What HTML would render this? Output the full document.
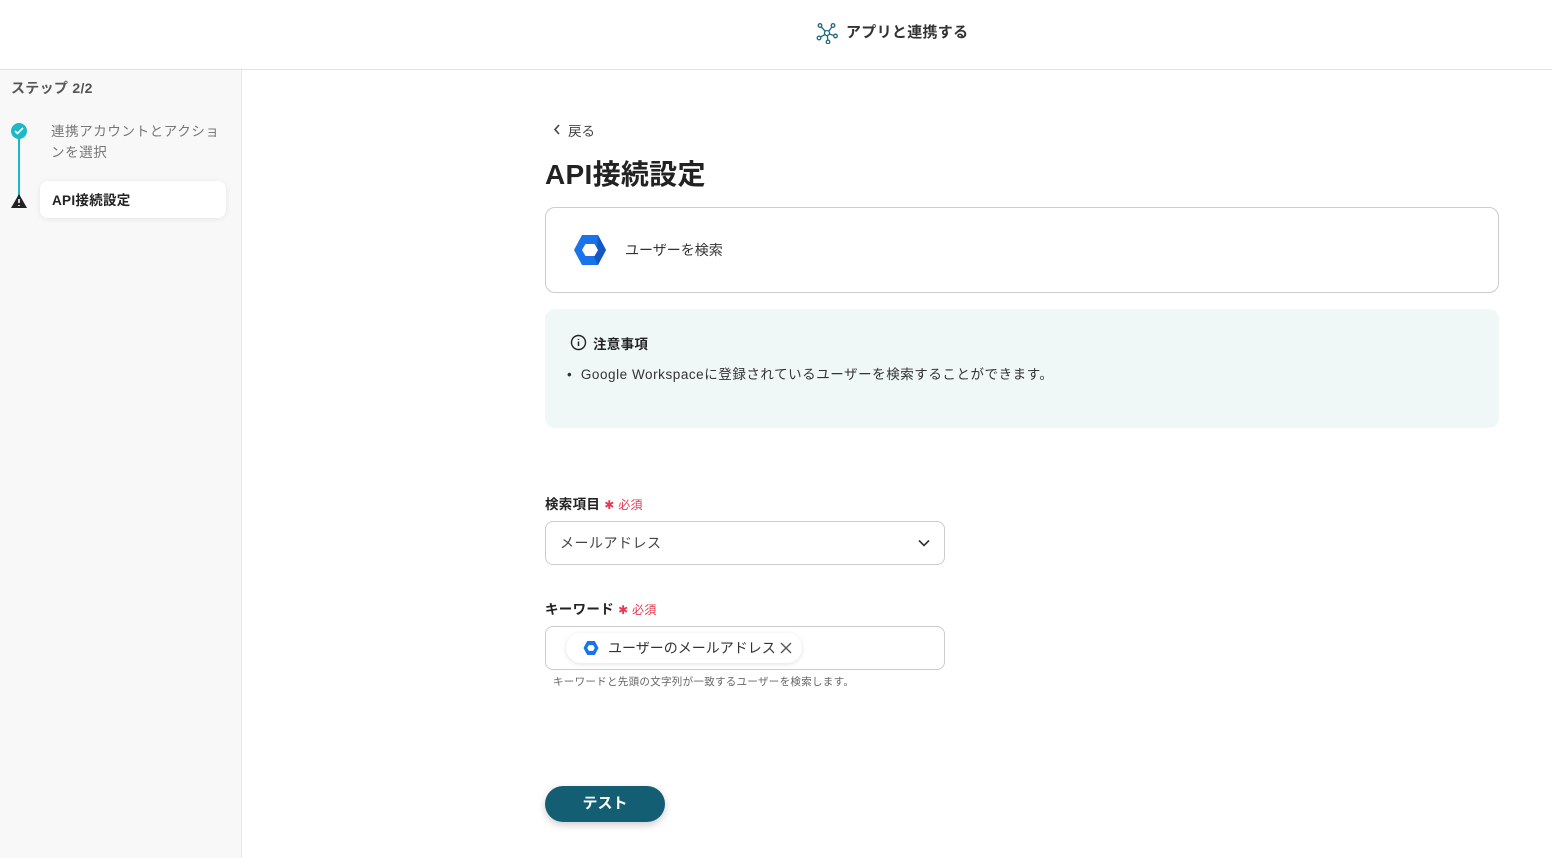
<!DOCTYPE html>
<html><head><meta charset="utf-8"><style>
*{box-sizing:border-box;margin:0;padding:0}
body{width:1552px;height:858px;overflow:hidden;background:#fff;font-family:"Liberation Sans","Noto Sans CJK JP",sans-serif;color:#222;position:relative}
.top{position:absolute;left:0;top:0;width:1552px;height:70px;border-bottom:1px solid #e3e3e3;background:#fff}
.side{position:absolute;left:0;top:70px;width:242px;height:788px;background:#f8f8f8;border-right:1px solid #e6e6e6}
.abs{position:absolute}
</style></head><body>
<div class="top">
 <svg class="abs" style="left:816px;top:22px" width="22" height="22" viewBox="0 0 22 22" fill="none" stroke="#1f6b80" stroke-width="1.3"><circle cx="11" cy="11" r="2.5"/><circle cx="4" cy="3.5" r="1.8"/><circle cx="17" cy="3.5" r="1.8"/><circle cx="3" cy="16" r="1.8"/><circle cx="12" cy="20" r="1.8"/><circle cx="19.5" cy="14" r="1.8"/><path d="M9 9L5.3 5M13 9l2.8-4M9 12.5L4.5 15M11.3 13.5l.5 4.8M13.3 12l4.5 1.5"/></svg>
 <div class="abs" style="left:846px;top:21px;font-size:15px;font-weight:bold;color:#333;letter-spacing:0.3px">アプリと連携する</div>
</div>
<div class="side">
 <div class="abs" style="left:11px;top:8px;font-size:14px;font-weight:bold;color:#555;letter-spacing:0.3px">ステップ 2/2</div>
 <div class="abs" style="left:18px;top:62px;width:2px;height:70px;background:#1cb9c8"></div>
 <div class="abs" style="left:11px;top:53px;width:16px;height:16px;border-radius:50%;background:#1cb9c8"></div>
 <svg class="abs" style="left:14px;top:57px" width="10" height="8"><path d="M1 4l2.5 2.5L9 1" stroke="#fff" stroke-width="1.6" fill="none"/></svg>
 <svg class="abs" style="left:10px;top:123px" width="18" height="16"><path d="M9 1L17 15H1z" fill="#222"/><path d="M9 6v4M9 12v1" stroke="#fff" stroke-width="1.6"/></svg>
 <div class="abs" style="left:51px;top:51px;font-size:13.5px;line-height:21px;color:#777;width:170px;letter-spacing:0.6px">連携アカウントとアクショ<br>ンを選択</div>
 <div class="abs" style="left:40px;top:111px;width:186px;height:37px;background:#fff;border-radius:8px;box-shadow:0 1px 6px rgba(0,0,0,.08);font-size:13.5px;font-weight:bold;padding:8px 12px;letter-spacing:0.3px">API接続設定</div>
</div>
<svg class="abs" style="left:553px;top:124px" width="8" height="11"><path d="M6 1L2 5.5 6 10" stroke="#444" stroke-width="1.6" fill="none"/></svg>
<div class="abs" style="left:568px;top:120px;font-size:13.5px;color:#444">戻る</div>
<div class="abs" style="left:545px;top:153px;font-size:28px;font-weight:bold;color:#222;letter-spacing:0.3px">API接続設定</div>
<div class="abs" style="left:545px;top:207px;width:954px;height:86px;border:1px solid #ccc;border-radius:10px"></div>
<svg class="abs" style="left:573px;top:234px" width="34" height="32" viewBox="0 0 34 32"><path d="M9 1h16l8 15-8 15H9L1 16z" fill="#1a73e8"/><path d="M25 1l8 15-8 15-4-8 3-7z" fill="#1557c4"/><path d="M12.5 10h9l3.5 6-3.5 6h-9L9 16z" fill="#fff"/></svg>
<div class="abs" style="left:625px;top:240px;font-size:14px;color:#333">ユーザーを検索</div>
<div class="abs" style="left:545px;top:309px;width:954px;height:119px;background:#f0f8f7;border-radius:10px"></div>
<svg class="abs" style="left:570px;top:334px" width="17" height="17"><circle cx="8.5" cy="8.5" r="7" stroke="#222" stroke-width="1.4" fill="none"/><path d="M8.5 7.5v4.5M8.5 5v1" stroke="#222" stroke-width="1.5"/></svg>
<div class="abs" style="left:593px;top:333px;font-size:13.5px;font-weight:bold;letter-spacing:0.3px">注意事項</div>
<div class="abs" style="left:567px;top:363px;font-size:13.5px;color:#333;letter-spacing:0.55px">•&nbsp; Google Workspaceに登録されているユーザーを検索することができます。</div>
<div class="abs" style="left:545px;top:493px;font-size:13.5px;font-weight:bold;letter-spacing:0.3px">検索項目 <span style="color:#e8364f;font-size:12px;font-weight:normal">✱ 必須</span></div>
<div class="abs" style="left:545px;top:521px;width:400px;height:44px;border:1px solid #ccc;border-radius:8px;padding:11px 14px;font-size:14px;color:#444;letter-spacing:0.5px">メールアドレス</div>
<svg class="abs" style="left:918px;top:539px" width="12" height="8"><path d="M1 1.5l5 5 5-5" stroke="#333" stroke-width="1.6" fill="none"/></svg>
<div class="abs" style="left:545px;top:598px;font-size:13.5px;font-weight:bold;letter-spacing:0.3px">キーワード <span style="color:#e8364f;font-size:12px;font-weight:normal">✱ 必須</span></div>
<div class="abs" style="left:545px;top:626px;width:400px;height:44px;border:1px solid #ccc;border-radius:8px"></div>
<div class="abs" style="left:566px;top:633px;width:236px;height:30px;background:#fff;border-radius:15px;box-shadow:0 1px 5px rgba(0,0,0,.12)"></div>
<svg class="abs" style="left:583px;top:640px" width="16" height="16" viewBox="0 0 34 32"><path d="M9 1h16l8 15-8 15H9L1 16z" fill="#1a73e8"/><path d="M12.5 10h9l3.5 6-3.5 6h-9L9 16z" fill="#fff"/></svg>
<div class="abs" style="left:608px;top:638px;font-size:14px;color:#333">ユーザーのメールアドレス</div>
<svg class="abs" style="left:780px;top:642px" width="12" height="12"><path d="M1 1l10 10M11 1L1 11" stroke="#555" stroke-width="1.4"/></svg>
<div class="abs" style="left:553px;top:674px;font-size:10.5px;color:#666;letter-spacing:0.3px">キーワードと先頭の文字列が一致するユーザーを検索します。</div>
<div class="abs" style="left:545px;top:786px;width:120px;height:36px;border-radius:18px;background:#135e73;color:#fff;font-size:15px;font-weight:bold;text-align:center;line-height:36px;box-shadow:0 3px 8px rgba(0,0,0,.2)">テスト</div>
</body></html>
